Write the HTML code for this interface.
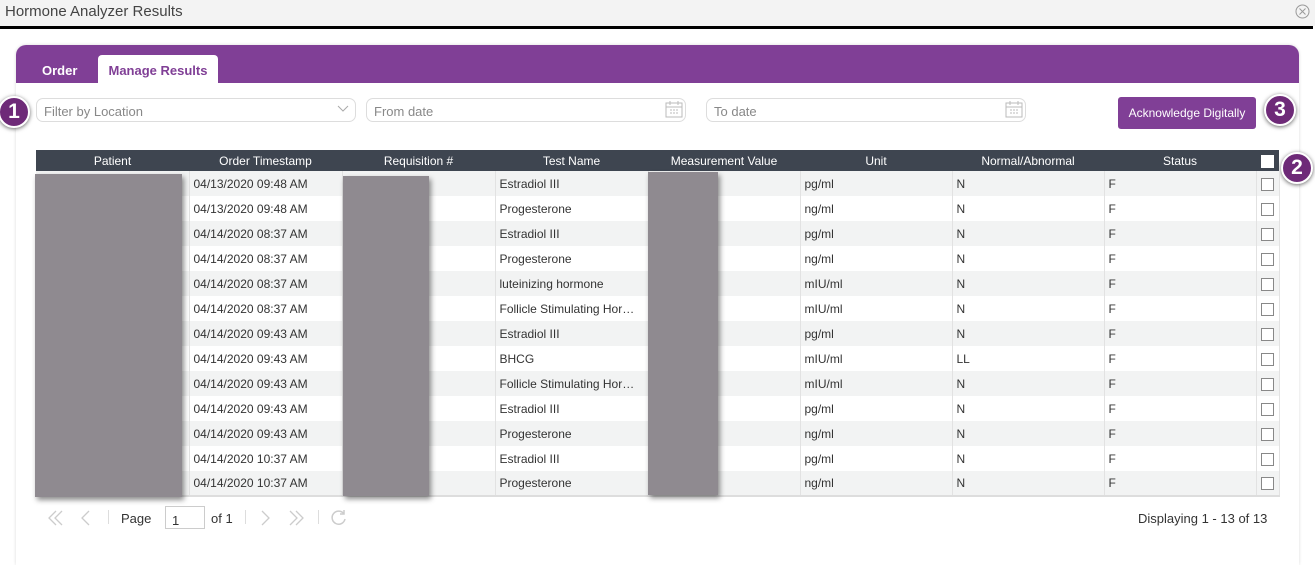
<!DOCTYPE html>
<html><head><style>
*{box-sizing:border-box;margin:0;padding:0}
body{width:1315px;height:552px;background:#fff;font-family:"Liberation Sans",sans-serif;position:relative;overflow:hidden;color:#333}
.a{position:absolute}
.title{left:0;top:0;width:1315px;height:26px;background:#f3f3f3;font-size:15px;color:#444;padding:3px 5px}
.bar{left:0;top:26px;width:1313px;height:3px;background:#000}
.panel{left:16px;top:45px;width:1283px;height:520px;background:#fff;border-radius:10px 10px 0 0;box-shadow:0 0 3px rgba(0,0,0,.15)}
.purp{left:16px;top:45px;width:1283px;height:38px;background:#803f96;border-radius:10px 10px 0 0}
.tab{font-size:13px;font-weight:bold;color:#fff}
.tab2{left:98px;top:55px;width:120px;height:28px;background:#fff;border-radius:4px 4px 0 0;color:#803f96;text-align:center;padding-top:8px}
.inp{height:24px;border:1px solid #ddd;border-radius:7px;font-size:13px;color:#888;padding:5px 7px 3px}
.badge{width:32px;height:32px;border-radius:50%;background:#6e2a78;border:2px solid #fff;box-shadow:0 1px 4px rgba(0,0,0,.6);color:#fff;font-weight:bold;font-size:21px;text-align:center;line-height:27px}
.btn{left:1118px;top:97px;width:138px;height:32px;background:#803f96;border-radius:3px;color:#fff;font-size:12px;text-align:center;line-height:33px}
table{position:absolute;left:36px;top:150px;width:1243px;border-collapse:collapse;font-size:12px;table-layout:fixed}
th{background:#3e4550;color:#fff;font-weight:normal;height:21px;font-size:12px}
tbody tr{height:25px}
td{height:25px;padding-left:4px;padding-right:6px;border-right:1px solid #e2e2e2;color:#333;white-space:nowrap;overflow:hidden;text-overflow:ellipsis}
td.c{padding:0;text-align:center;text-overflow:clip}
tr:nth-child(odd) td{background:#f2f3f3}
tbody tr:last-child td{border-bottom:2px solid #ddd}
.cb{display:inline-block;width:13px;height:13px;border:1px solid #888;background:#fff;vertical-align:middle}
.red{background:#8f8a90;box-shadow:2px 3px 5px rgba(0,0,0,.45)}
.pg{font-size:13px;color:#333}
</style></head><body>
<div class="a title">Hormone Analyzer Results</div>
<svg class="a" style="left:1295px;top:4px" width="15" height="15" viewBox="0 0 15 15"><circle cx="7.5" cy="7.5" r="6.5" fill="none" stroke="#999"/><path d="M4.5 4.5L10.5 10.5M10.5 4.5L4.5 10.5" stroke="#999"/></svg>
<div class="a bar"></div>
<div class="a panel"></div>
<div class="a purp"></div>
<div class="a tab" style="left:42px;top:63px">Order</div>
<div class="a tab tab2">Manage Results</div>
<div class="a inp" style="left:36px;top:98px;width:320px">Filter by Location</div>
<svg class="a" style="left:337px;top:105px" width="12" height="8"><path d="M1 1L6 6L11 1" fill="none" stroke="#aaa"/></svg>
<div class="a inp" style="left:366px;top:98px;width:320px">From date</div>
<div class="a inp" style="left:706px;top:98px;width:320px">To date</div>
<svg class="a" style="left:665px;top:101px" width="18" height="17"><rect x="1" y="2" width="16" height="14" fill="none" stroke="#bbb"/><path d="M1 6H17M5 0V4M13 0V4" stroke="#bbb"/><path d="M5 9h2M8 9h2M11 9h2M5 12h2M8 12h2M11 12h2" stroke="#bbb"/></svg>
<svg class="a" style="left:1005px;top:101px" width="18" height="17"><rect x="1" y="2" width="16" height="14" fill="none" stroke="#bbb"/><path d="M1 6H17M5 0V4M13 0V4" stroke="#bbb"/><path d="M5 9h2M8 9h2M11 9h2M5 12h2M8 12h2M11 12h2" stroke="#bbb"/></svg>
<div class="a btn">Acknowledge Digitally</div>
<div class="a badge" style="left:-2px;top:96px">1</div>
<div class="a badge" style="left:1264px;top:94px">3</div>
<div class="a badge" style="left:1281px;top:152px">2</div>
<table>
<colgroup><col style="width:153px"><col style="width:153px"><col style="width:153px"><col style="width:153px"><col style="width:152px"><col style="width:152px"><col style="width:152px"><col style="width:152px"><col style="width:23px"></colgroup>
<thead><tr><th>Patient</th><th>Order Timestamp</th><th>Requisition #</th><th>Test Name</th><th>Measurement Value</th><th>Unit</th><th>Normal/Abnormal</th><th>Status</th><th><span class="cb" style="border-color:#fff"></span></th></tr></thead>
<tbody>
<tr><td></td><td>04/13/2020 09:48 AM</td><td></td><td>Estradiol III</td><td></td><td>pg/ml</td><td>N</td><td>F</td><td class="c"><span class="cb"></span></td></tr>
<tr><td></td><td>04/13/2020 09:48 AM</td><td></td><td>Progesterone</td><td></td><td>ng/ml</td><td>N</td><td>F</td><td class="c"><span class="cb"></span></td></tr>
<tr><td></td><td>04/14/2020 08:37 AM</td><td></td><td>Estradiol III</td><td></td><td>pg/ml</td><td>N</td><td>F</td><td class="c"><span class="cb"></span></td></tr>
<tr><td></td><td>04/14/2020 08:37 AM</td><td></td><td>Progesterone</td><td></td><td>ng/ml</td><td>N</td><td>F</td><td class="c"><span class="cb"></span></td></tr>
<tr><td></td><td>04/14/2020 08:37 AM</td><td></td><td>luteinizing hormone</td><td></td><td>mIU/ml</td><td>N</td><td>F</td><td class="c"><span class="cb"></span></td></tr>
<tr><td></td><td>04/14/2020 08:37 AM</td><td></td><td>Follicle Stimulating Hormone</td><td></td><td>mIU/ml</td><td>N</td><td>F</td><td class="c"><span class="cb"></span></td></tr>
<tr><td></td><td>04/14/2020 09:43 AM</td><td></td><td>Estradiol III</td><td></td><td>pg/ml</td><td>N</td><td>F</td><td class="c"><span class="cb"></span></td></tr>
<tr><td></td><td>04/14/2020 09:43 AM</td><td></td><td>BHCG</td><td></td><td>mIU/ml</td><td>LL</td><td>F</td><td class="c"><span class="cb"></span></td></tr>
<tr><td></td><td>04/14/2020 09:43 AM</td><td></td><td>Follicle Stimulating Hormone</td><td></td><td>mIU/ml</td><td>N</td><td>F</td><td class="c"><span class="cb"></span></td></tr>
<tr><td></td><td>04/14/2020 09:43 AM</td><td></td><td>Estradiol III</td><td></td><td>pg/ml</td><td>N</td><td>F</td><td class="c"><span class="cb"></span></td></tr>
<tr><td></td><td>04/14/2020 09:43 AM</td><td></td><td>Progesterone</td><td></td><td>ng/ml</td><td>N</td><td>F</td><td class="c"><span class="cb"></span></td></tr>
<tr><td></td><td>04/14/2020 10:37 AM</td><td></td><td>Estradiol III</td><td></td><td>pg/ml</td><td>N</td><td>F</td><td class="c"><span class="cb"></span></td></tr>
<tr><td></td><td>04/14/2020 10:37 AM</td><td></td><td>Progesterone</td><td></td><td>ng/ml</td><td>N</td><td>F</td><td class="c"><span class="cb"></span></td></tr>
</tbody></table>
<div class="a red" style="left:35px;top:174px;width:147px;height:323px"></div>
<div class="a red" style="left:343px;top:176px;width:86px;height:320px"></div>
<div class="a red" style="left:648px;top:172px;width:70px;height:323px"></div>
<svg class="a" style="left:46px;top:509px" width="300" height="18" fill="none" stroke="#ccc" stroke-width="1.3">
<path d="M10 2L3 9L10 16M16 2L9 9L16 16"/>
<path d="M43 2L36 9L43 16"/>
<path d="M216 2L223 9L216 16"/>
<path d="M244 2L251 9L244 16M250 2L257 9L250 16"/>
</svg>
<div class="a" style="left:108px;top:510px;width:1px;height:14px;background:#ddd"></div>
<div class="a pg" style="left:121px;top:511px">Page</div>
<div class="a" style="left:165px;top:506px;width:40px;height:23px;border:1px solid #ccc;font-size:13px;padding:6px 6px 0">1</div>
<div class="a pg" style="left:211px;top:511px">of 1</div>
<div class="a" style="left:245px;top:510px;width:1px;height:14px;background:#ddd"></div>
<div class="a" style="left:318px;top:510px;width:1px;height:14px;background:#ddd"></div>
<svg class="a" style="left:330px;top:509px" width="17" height="17"><path d="M14 5A6.5 6.5 0 1 0 15 10" fill="none" stroke="#ccc" stroke-width="1.5"/><path d="M14 1V5H10" fill="none" stroke="#ccc" stroke-width="1.5"/></svg>
<div class="a pg" style="left:1138px;top:511px">Displaying 1 - 13 of 13</div>
</body></html>
